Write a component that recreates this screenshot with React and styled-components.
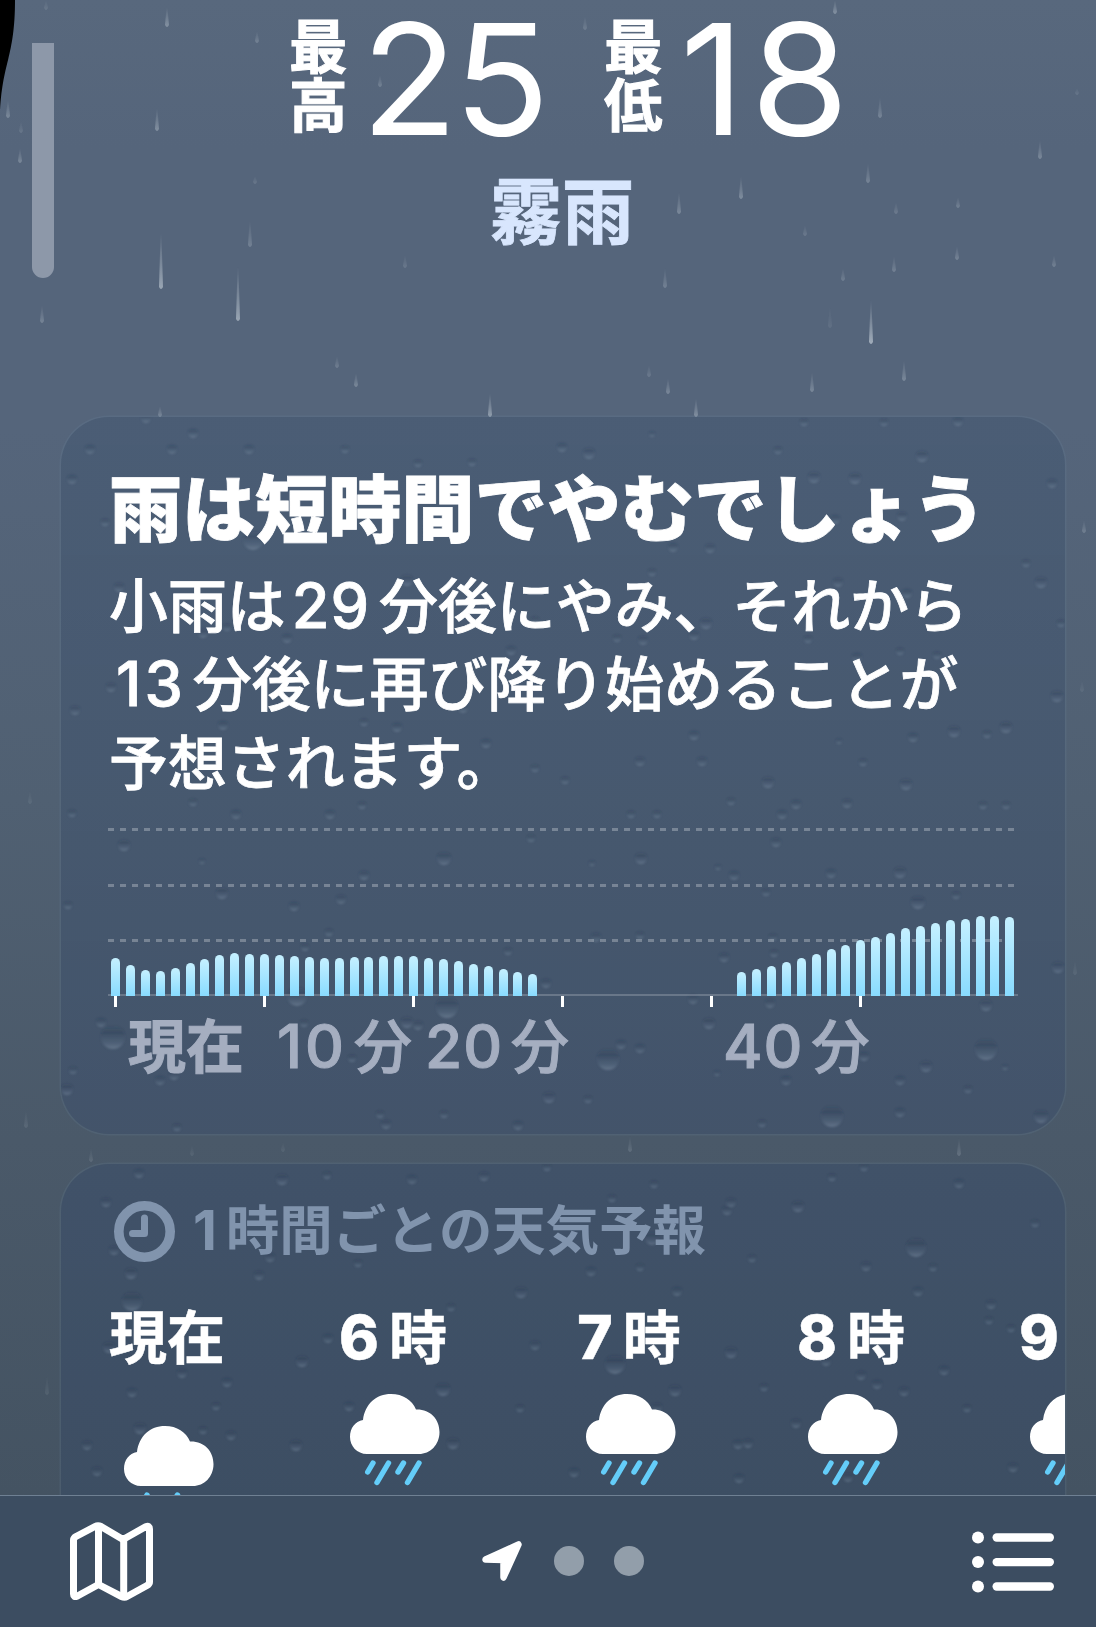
import React from 'react';
import styled, { createGlobalStyle } from 'styled-components';

// x, top, bottom, opacity
const streaks = [
    [46, 0, 10, .12], [167, 7, 27, .3], [257, 31, 43, .2], [157, 108, 131, .3], [380, 75, 87, .2],
    [8, 100, 118, .25], [21, 121, 133, .12], [20, 148, 163, .25], [255, 176, 184, .14], [161, 232, 289, .45],
    [250, 220, 247, .2], [238, 266, 321, .45], [42, 305, 323, .22], [405, 255, 268, .14], [337, 356, 368, .18],
    [356, 373, 387, .25], [490, 393, 417, .4], [160, 406, 417, .25], [585, 16, 30, .16], [835, 0, 14, .3],
    [880, 97, 118, .22], [1077, 88, 95, .12], [1040, 140, 159, .25], [868, 163, 183, .22], [741, 176, 199, .28],
    [679, 192, 214, .25], [896, 202, 214, .16], [958, 197, 208, .2], [805, 225, 236, .15], [957, 246, 260, .22],
    [894, 256, 272, .2], [1054, 255, 267, .2], [843, 268, 281, .18], [665, 268, 288, .2], [871, 300, 344, .5],
    [830, 306, 328, .08], [904, 360, 381, .25], [649, 365, 377, .15], [668, 378, 394, .25], [812, 372, 392, .25],
    [696, 398, 417, .3], [1084, 520, 533, .2], [1082, 680, 692, .08], [26, 1110, 1128, .1], [630, 1136, 1152, .14],
    [959, 1138, 1156, .16], [91, 1148, 1162, .12], [192, 1145, 1156, .08], [283, 1142, 1152, .08], [47, 1375, 1395, .08],
    [30, 790, 804, .08], [1075, 960, 975, .08]
];

// x, y, radius
const drops = [
    [90, 449, 5], [172, 449, 5], [193, 433, 5], [146, 418, 5], [249, 449, 5], [345, 449, 4], [72, 479, 5],
    [253, 540, 10], [105, 522, 4], [119, 587, 5], [418, 463, 4], [472, 462, 4], [562, 447, 5], [203, 633, 5],
    [287, 638, 5], [407, 580, 6], [511, 650, 5], [111, 687, 5], [75, 710, 5], [223, 725, 5], [364, 722, 4],
    [397, 727, 5], [486, 743, 5], [535, 768, 4], [565, 780, 4], [193, 802, 4], [362, 805, 4], [227, 627, 4],
    [463, 708, 5], [535, 620, 4], [589, 453, 6], [652, 434, 3], [778, 450, 4], [804, 422, 4], [884, 422, 4],
    [958, 421, 5], [922, 456, 6], [814, 477, 6], [855, 478, 6], [1052, 483, 5], [835, 519, 5], [902, 516, 5],
    [673, 547, 5], [710, 548, 5], [1026, 563, 4], [1041, 582, 6], [652, 572, 4], [706, 623, 6], [617, 638, 4],
    [643, 640, 5], [694, 635, 5], [808, 639, 4], [857, 657, 5], [900, 651, 4], [937, 655, 4], [1057, 696, 6],
    [1061, 623, 4], [694, 735, 5], [839, 741, 3], [913, 737, 5], [954, 731, 6], [987, 734, 4], [1006, 727, 6],
    [640, 761, 5], [702, 761, 5], [863, 762, 4], [768, 782, 6], [906, 784, 6], [731, 801, 4], [796, 804, 5],
    [847, 803, 5], [983, 805, 4], [1006, 805, 4], [838, 582, 5], [907, 593, 5],
    [72, 813, 4], [124, 845, 6], [236, 814, 5], [330, 814, 5], [202, 861, 3], [444, 858, 7], [364, 875, 5],
    [531, 838, 4], [222, 893, 6], [68, 905, 4], [294, 906, 5], [341, 899, 5], [329, 932, 4], [305, 947, 4],
    [508, 951, 4], [297, 996, 10], [447, 1007, 11], [113, 1037, 12], [101, 1022, 5], [407, 1022, 6], [418, 1025, 5],
    [546, 983, 5], [160, 1080, 5], [174, 1075, 5], [67, 1089, 6], [380, 1114, 4], [386, 1124, 5], [444, 1114, 4],
    [518, 1125, 5], [549, 1097, 6], [177, 1127, 4], [73, 1070, 4], [352, 1058, 4], [304, 1023, 4],
    [631, 814, 4], [657, 814, 4], [782, 814, 5], [776, 842, 5], [641, 858, 6], [592, 863, 3], [718, 867, 3],
    [734, 875, 5], [766, 892, 4], [831, 873, 5], [900, 872, 6], [918, 902, 7], [956, 895, 4], [596, 937, 5],
    [640, 935, 4], [724, 957, 5], [774, 953, 4], [773, 937, 4], [1058, 967, 6], [693, 999, 5], [770, 1003, 5],
    [709, 1023, 6], [608, 1059, 11], [621, 1044, 5], [640, 1048, 5], [864, 1056, 5], [926, 1066, 6], [986, 1049, 11],
    [986, 1005, 6], [786, 1080, 5], [900, 1080, 5], [968, 1089, 4], [900, 1112, 5], [832, 1116, 11], [1041, 1116, 7],
    [762, 1123, 4], [588, 1099, 4], [717, 1073, 3], [1005, 1067, 3],
    [139, 1173, 5], [282, 1179, 6], [327, 1175, 4], [412, 1179, 5], [484, 1176, 5], [547, 1167, 4], [106, 1202, 5],
    [114, 1250, 5], [270, 1257, 5], [131, 1273, 6], [259, 1275, 5], [132, 1301, 10], [521, 1292, 6], [109, 1347, 6],
    [328, 1338, 5], [302, 1361, 6], [182, 1373, 5], [227, 1382, 5], [132, 1392, 5], [443, 1389, 7], [349, 1406, 5],
    [216, 1406, 4], [140, 1428, 6], [203, 1430, 4], [231, 1435, 5], [87, 1445, 5], [296, 1445, 6], [453, 1443, 6],
    [97, 1471, 5], [535, 1345, 5], [451, 1307, 4], [358, 1263, 4], [520, 1408, 4],
    [654, 1184, 4], [731, 1202, 5], [727, 1210, 5], [798, 1206, 6], [832, 1177, 4], [864, 1167, 4], [959, 1183, 5],
    [1035, 1223, 4], [916, 1247, 10], [612, 1198, 4], [652, 1238, 7], [752, 1258, 4], [866, 1266, 5], [933, 1267, 4],
    [591, 1271, 5], [640, 1267, 4], [677, 1291, 5], [918, 1291, 5], [615, 1364, 10], [991, 1304, 5], [989, 1320, 4],
    [1011, 1328, 4], [731, 1352, 6], [826, 1361, 5], [861, 1375, 5], [944, 1370, 5], [877, 1384, 5], [904, 1391, 5],
    [764, 1387, 4], [675, 1390, 6], [796, 1423, 5], [967, 1408, 4], [738, 1444, 5], [748, 1443, 5], [739, 1478, 5],
    [848, 1477, 5], [574, 1472, 5], [1013, 1467, 5], [657, 1407, 5]
];

// one value per minute, in px
const rain = [
    38, 31, 26, 25, 28, 33, 37, 41, 43, 42, 42, 41, 40, 39, 38, 38, 39, 39, 40, 40, 40, 38, 37, 35, 32, 30, 27, 24, 22,
    0, 0, 0, 0, 0, 0, 0, 0, 0, 0, 0, 0, 0,
    24, 27, 30, 34, 38, 42, 47, 51, 56, 59, 63, 68, 70, 73, 76, 77, 80, 80, 79
];

const hours = [
    { value: '', label: '現在', gap: 107, drizzle: true },
    { value: '6', label: '時', gap: 117 },
    { value: '7', label: '時', gap: 103 },
    { value: '8', label: '時', gap: 103 },
    { value: '9', label: '時', gap: 0 }
];

function RainStreaks() {
    return (
        <Sky viewBox="0 0 1096 1627">
            <defs>
                <linearGradient id="streak" x1="0" y1="0" x2="0" y2="1">
                    <stop offset="0" stopColor="#dfe8ee" stopOpacity="0" />
                    <stop offset="1" stopColor="#dfe8ee" />
                </linearGradient>
                <filter id="haze" x="0" y="0" width="1" height="1"><feGaussianBlur stdDeviation=".6" /></filter>
            </defs>
            <path d="M0 0H15C15 58 2 62 0 115Z" fill="#000" />
            <g filter="url(#haze)">
                {streaks.map(([x, top, bottom, opacity]) => (
                    <path
                        key={`${x}-${top}`}
                        d={`M${x - .4} ${top}H${x + .4}L${x + 2} ${bottom - 2}Q${x} ${bottom + 2} ${x - 2} ${bottom - 2}Z`}
                        fill="url(#streak)"
                        opacity={opacity * 1.1}
                    />
                ))}
            </g>
        </Sky>
    )
}

function Droplets({ top, height }) {
    const visible = drops.filter(([, y]) => y >= top && y <= top + height);

    return (
        <Wet viewBox={`61 ${top} 1004 ${height}`}>
            <defs>
                <linearGradient id={`drop${top}`} x1="0" y1="0" x2="0" y2="1">
                    <stop offset="0" stopColor="#26384f" stopOpacity="0" />
                    <stop offset=".35" stopColor="#26384f" stopOpacity=".38" />
                    <stop offset=".65" stopColor="#6b7f96" stopOpacity=".2" />
                    <stop offset="1" stopColor="#8fa0b4" stopOpacity=".6" />
                </linearGradient>
                <filter id={`soft${top}`}><feGaussianBlur stdDeviation=".9" /></filter>
            </defs>
            <g filter={`url(#soft${top})`}>
                {visible.map(([x, y, r]) => (
                    <circle key={`${x}-${y}`} cx={x} cy={y} r={r} fill={`url(#drop${top})`} opacity=".75" />
                ))}
            </g>
        </Wet>
    )
}

function RainCloud({ drizzle }) {
    return (
        <svg width="90" height="92" viewBox="0 0 90 92">
            <path d="M17 60C7 60 0 52 0 43C0 34 5 27.500 13 26C15 10 26 0 41 0C53 0 62 6 66 15.500C80 15 89.500 25 89.500 38C89.500 51 80 60 69 60Z" fill="#fff" />
            <g stroke="#64cdf9" strokeWidth="5.400" strokeLinecap="round">
                {drizzle
                    ? <path d="M23 69L17.700 78M38.500 80L33 89M53.500 69L48 78M69 80L63.500 89" />
                    : <path d="M23 69L17.700 78M38.500 69L27 88.500M53.500 69L48 78M69 69L57.500 88.500" />}
            </g>
        </svg>
    )
}

function App() {
    return (
        <Screen>
            <GlobalStyle />
            <RainStreaks />
            <ScrollThumb />
            <Header>
                <Temperatures>
                    <Stacked><span>最</span><span>高</span></Stacked>
                    <Degrees $width={231} $track={-4}>25</Degrees>
                    <Stacked><span>最</span><span>低</span></Stacked>
                    <Degrees $width={180} $left={4} $track={6}>18</Degrees>
                </Temperatures>
                <Condition>霧雨</Condition>
            </Header>

            <Card $height={717} $from="rgba(68, 88, 113, .6)" $to="rgba(63, 81, 107, .65)">
                <Droplets top={417} height={717} />
                <Title>雨は短時間でやむでしょう</Title>
                <Summary>
                    小雨は<Figure $left={6} $right={9}>29</Figure>分後にやみ、それから<br />
                    <Figure $left={7} $right={7} $track={3}>13</Figure>分後に再び降り始めることが<br />
                    予想されます。
                </Summary>
                <Chart>
                    <GridLine /><GridLine /><GridLine />
                    <Bars>
                        {rain.map((value, i) => (
                            <Minute key={i} $tick={i % 10 === 0 && i < 60}>
                                <Bar style={{ height: value }} />
                            </Minute>
                        ))}
                    </Bars>
                </Chart>
                <Axis>
                    <AxisLabel $width={148} $bold>現在</AxisLabel>
                    <AxisLabel $width={149}><Figure $left={1} $right={7} $track={3}>10</Figure>分</AxisLabel>
                    <AxisLabel $width={298}><Figure $right={8}>20</Figure>分</AxisLabel>
                    <AxisLabel $width={160}><Figure $right={8}>40</Figure>分</AxisLabel>
                </Axis>
            </Card>

            <Card $height={400} $from="rgba(60, 79, 105, .65)" $to="rgba(57, 75, 99, .65)">
                <Droplets top={1164} height={400} />
                <HourlyHead>
                    <svg width="61" height="61" viewBox="0 0 61 61" fill="none" stroke="currentColor">
                        <circle cx="30.500" cy="30.500" r="25.700" strokeWidth="9.600" />
                        <path d="M30.500 17V32.500H18.500" strokeWidth="7" strokeLinecap="round" strokeLinejoin="round" />
                    </svg>
                    <Heading><Figure $weight={700} $right={8}>1</Figure>時間ごとの天気予報</Heading>
                </HourlyHead>
                <Hours>
                    {hours.map(({ value, label, gap, drizzle }) => (
                        <Hour key={value} $gap={gap} $low={drizzle}>
                            <HourLabel>
                                {value && <Figure $weight={800} $right={9}>{value}</Figure>}{label}
                            </HourLabel>
                            <RainCloud drizzle={drizzle} />
                        </Hour>
                    ))}
                </Hours>
            </Card>

            <Toolbar>
                <svg width="83" height="80" viewBox="0 0 83 80" fill="none" stroke="#fff" strokeWidth="7" strokeLinejoin="round">
                    <path d="M3.500 18Q3.500 16 6 14.500L25 4.500Q28 3 31 4.500L53 17.500L76 4.500Q79.500 3.500 79.500 7V60Q79.500 62 77 63.500L57 74.500Q54.500 76 51.500 74.500L28.500 62.500L7 74.300Q3.500 75.500 3.500 72Z" />
                    <path d="M28.500 5V63M53.700 18V75" />
                </svg>
                <Pages>
                    <svg width="41" height="40" viewBox="0 0 41 40">
                        <path d="M3.500 18.500L36.500 3.500L21.500 36.500V19Z" fill="#fff" stroke="#fff" strokeWidth="6.500" strokeLinejoin="round" />
                    </svg>
                    <Dot />
                    <Dot />
                </Pages>
                <svg width="82" height="80" viewBox="0 -9.500 82 80" fill="#fff">
                    {[6, 30.6, 55].map((y) => (
                        <g key={y}>
                            <circle cx="6" cy={y} r="6" />
                            <rect x="20.500" y={y - 4.2} width="61.500" height="8.400" rx="4.200" />
                        </g>
                    ))}
                </svg>
            </Toolbar>
        </Screen>
    )
}

const GlobalStyle = createGlobalStyle`
    *{
        box-sizing: border-box;
    }

    body{
        margin: 0;
        background: #3c4d61;
    }

    svg{
        display: block;
        flex: none;
    }
`;

const Screen = styled.div`
    position: relative;
    display: flex;
    flex-direction: column;
    align-items: center;
    width: 1096px;
    height: 1627px;
    overflow: hidden;
    color: #fff;
    white-space: nowrap;
    font-family: Inter, 'Noto Sans CJK JP', sans-serif;
    background: linear-gradient(180deg, #58687d 0, #55657b 150px, #55657b 430px, #506072 800px, #4a5969 1140px, #445362 1495px);
`;

const Sky = styled.svg`
    position: absolute;
    inset: 0;
    width: 100%;
    height: 100%;
`;

const Wet = styled.svg`
    position: absolute;
    inset: 0;
    width: 100%;
    height: 100%;
`;

const ScrollThumb = styled.div`
    position: absolute;
    left: 32px;
    top: 43px;
    width: 22px;
    height: 235px;
    border-radius: 0 0 11px 11px;
    background: #8d98a9;
`;

const Header = styled.header`
    position: relative;
    display: flex;
    flex-direction: column;
    align-items: center;
    width: 100%;
    height: 417px;
    flex: none;
`;

const Temperatures = styled.div`
    display: flex;
    gap: 12px;
    width: 100%;
    height: 164px;
    padding-left: 289px;
`;

const Stacked = styled.div`
    display: flex;
    flex-direction: column;
    padding-top: 17px;
    width: 60px;
    font-size: 58.5px;
    line-height: 59px;
    font-weight: 700;
    -webkit-text-stroke: 1px currentColor;
`;

const Degrees = styled.div`
    width: ${({ $width }) => $width}px;
    margin-left: ${({ $left }) => $left || 0}px;
    font-size: 154px;
    line-height: 158px;
    letter-spacing: ${({ $track }) => $track}px;
    transform: scaleX(1.03);
    transform-origin: left;
`;

const Condition = styled.div`
    padding-left: 28px;
    font-size: 72px;
    line-height: 96px;
    font-weight: 700;
    color: #d8e6fd;
    -webkit-text-stroke: .8px currentColor;
`;

const Card = styled.section`
    position: relative;
    width: 1004px;
    height: ${({ $height }) => $height}px;
    flex: none;
    margin: 0 0 30px 30px;
    padding: 1px 0 0 48px;
    overflow: hidden;
    border-radius: 48px;
    box-shadow: 0 0 0 1.5px rgba(115, 140, 165, .16);
    background: linear-gradient(180deg, ${({ $from }) => $from}, ${({ $to }) => $to});
`;

const Title = styled.h1`
    position: relative;
    margin: 38px 0 0;
    font-size: 73.1px;
    line-height: 108px;
    font-weight: 900;
    -webkit-text-stroke: .8px currentColor;
`;

const Summary = styled.p`
    position: relative;
    margin: 4px 0 0;
    font-size: 58.9px;
    line-height: 78.4px;
    font-weight: 500;
    -webkit-text-stroke: .8px currentColor;
`;

const Figure = styled.span`
    margin-left: ${({ $left }) => $left || 0}px;
    margin-right: ${({ $right }) => $right || 0}px;
    font-size: 1.04em;
    line-height: 0;
    font-weight: ${({ $weight }) => $weight || 550};
    letter-spacing: ${({ $track }) => $track || 1}px;
`;

const Chart = styled.div`
    position: relative;
    width: 910px;
    height: 168px;
    margin: 25px 0 0 -1px;
    border-bottom: 2px solid rgba(255, 255, 255, .2);
`;

const GridLine = styled.div`
    height: 3px;
    width: 906px;
    margin-bottom: 52.300px;
    background: repeating-linear-gradient(90deg, rgba(255, 255, 255, .27) 0 6px, transparent 6px 12px);
`;

const Bars = styled.div`
    position: absolute;
    left: 3px;
    right: 3px;
    bottom: -2px;
    display: flex;
    align-items: flex-end;
    justify-content: space-between;
`;

const Minute = styled.div`
    position: relative;
    width: 9px;

    &::after{
        content: '';
        display: ${({ $tick }) => $tick ? 'block' : 'none'};
        position: absolute;
        top: 100%;
        left: 3px;
        width: 3px;
        height: 11px;
        background: #fff;
    }
`;

const Bar = styled.div`
    border-radius: 5px 5px 0 0;
    background: linear-gradient(180deg, #c5f0ff, #88dbff);
`;

const Axis = styled.div`
    position: relative;
    display: flex;
    padding-left: 19px;
    margin-top: 8px;
    color: #a5aec0;
    font-size: 58px;
    line-height: 86px;
`;

const AxisLabel = styled.div`
    width: ${({ $width }) => $width}px;
    font-weight: ${({ $bold }) => $bold ? 700 : 500};
    -webkit-text-stroke: 1px currentColor;
`;

const HourlyHead = styled.div`
    position: relative;
    display: flex;
    gap: 18px;
    height: 61px;
    margin-top: 36px;
    padding-left: 5px;
    color: #8194ad;
`;

const Heading = styled.h2`
    margin: 0;
    font-size: 53.4px;
    line-height: 59px;
    font-weight: 600;
`;

const Hours = styled.div`
    position: relative;
    display: flex;
    margin-top: 35px;
`;

const Hour = styled.div`
    display: flex;
    flex-direction: column;
    align-items: center;
    width: 119px;
    flex: none;
    margin-right: ${({ $gap }) => $gap}px;

    svg{
        margin-top: ${({ $low }) => $low ? 47 : 15}px;
    }
`;

const HourLabel = styled.div`
    height: 82px;
    padding-right: 3px;
    font-size: 58px;
    line-height: 82px;
    font-weight: 700;
    -webkit-text-stroke: .5px currentColor;
`;

const Toolbar = styled.nav`
    position: absolute;
    left: 0;
    right: 0;
    bottom: 0;
    display: flex;
    justify-content: space-between;
    height: 132px;
    padding: 26px 42px 0 70px;
    border-top: 1px solid #6f8093;
    background: #3c4d61;
`;

const Pages = styled.div`
    display: flex;
    align-items: center;
    height: 78px;
    gap: 30px;

    svg{
        margin-right: 1px;
    }
`;

const Dot = styled.span`
    width: 30px;
    height: 30px;
    border-radius: 50%;
    background: #929eaa;
`;

export default App;
